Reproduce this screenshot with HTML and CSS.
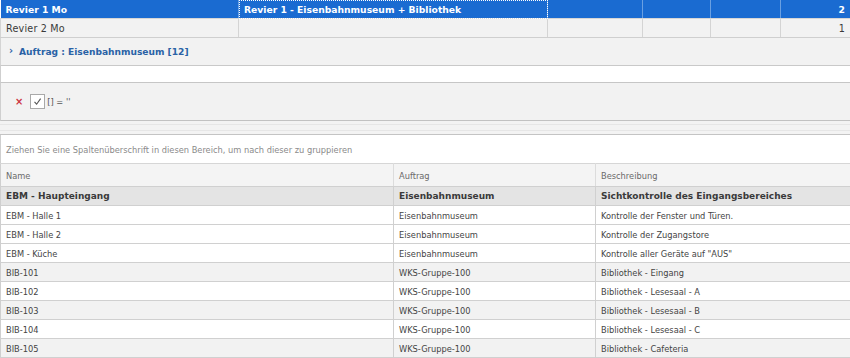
FILE: index.html
```html
<!DOCTYPE html>
<html>
<head>
<meta charset="utf-8">
<link rel="stylesheet" href="styles.css">
</head>
<body>
<table class="master">
  <colgroup><col class="c1"><col class="c2"><col class="c3"><col class="c4"><col class="c5"><col></colgroup>
  <tr class="sel">
    <td class="b">Revier 1 Mo</td>
    <td class="b focus">Revier 1 - Eisenbahnmuseum + Bibliothek</td>
    <td></td><td></td><td></td>
    <td class="b num">2</td>
  </tr>
  <tr class="norm">
    <td>Revier 2 Mo</td>
    <td></td><td></td><td></td><td></td>
    <td class="num">1</td>
  </tr>
</table>
<div class="grouprow"><span class="chev">›</span><span class="gtext">Auftrag : Eisenbahnmuseum [12]</span></div>
<div class="blank"></div>
<div class="filter">
  <span class="x">×</span>
  <span class="chk"><svg width="11" height="11" viewBox="0 0 11 11"><path d="M2.5 5.8 L4.6 8.2 L8.6 2.6" fill="none" stroke="#555" stroke-width="1.1"/></svg></span>
  <span class="ftext">[] = ''</span>
</div>
<div class="splitter"><div class="sl"></div></div>
<div class="grouppanel">Ziehen Sie eine Spaltenüberschrift in diesen Bereich, um nach dieser zu gruppieren</div>
<table class="detail">
  <colgroup><col class="d1"><col class="d2"><col></colgroup>
  <tr class="head"><td>Name</td><td>Auftrag</td><td>Beschreibung</td></tr>
  <tr class="grp"><td>EBM - Haupteingang</td><td>Eisenbahnmuseum</td><td>Sichtkontrolle des Eingangsbereiches</td></tr>
  <tr><td>EBM - Halle 1</td><td>Eisenbahnmuseum</td><td>Kontrolle der Fenster und Türen.</td></tr>
  <tr><td>EBM - Halle 2</td><td>Eisenbahnmuseum</td><td>Kontrolle der Zugangstore</td></tr>
  <tr><td>EBM - Küche</td><td>Eisenbahnmuseum</td><td>Kontrolle aller Geräte auf "AUS"</td></tr>
  <tr class="alt"><td>BIB-101</td><td>WKS-Gruppe-100</td><td>Bibliothek - Eingang</td></tr>
  <tr><td>BIB-102</td><td>WKS-Gruppe-100</td><td>Bibliothek - Lesesaal - A</td></tr>
  <tr class="alt"><td>BIB-103</td><td>WKS-Gruppe-100</td><td>Bibliothek - Lesesaal - B</td></tr>
  <tr><td>BIB-104</td><td>WKS-Gruppe-100</td><td>Bibliothek - Lesesaal - C</td></tr>
  <tr class="alt"><td>BIB-105</td><td>WKS-Gruppe-100</td><td>Bibliothek - Cafeteria</td></tr>
</table>
</body>
</html>
```
FILE: styles.css
```css
html, body {
  margin: 0;
  padding: 0;
  background: #ffffff;
}
body {
  font-family: "DejaVu Sans Condensed", "DejaVu Sans", sans-serif;
  font-size: 9.2px;
  color: #3a3a3a;
  width: 850px;
  overflow: hidden;
}
table {
  border-collapse: collapse;
  table-layout: fixed;
  width: 850px;
}
td {
  padding: 0 5px;
  white-space: nowrap;
  overflow: hidden;
}
.master {
  font-family: "DejaVu Sans", sans-serif;
  font-size: 9.6px;
  letter-spacing: 0.2px;
}
.master .c1 { width: 238px; }
.master .c2 { width: 309px; }
.master .c3 { width: 95px; }
.master .c4 { width: 68px; }
.master .c5 { width: 70px; }
.master td { height: 18px; }
.master .sel td {
  background: #1a6bd1;
  color: #ffffff;
  border-right: 1px solid #6aa0e2;
  border-bottom: 1px solid #d6d6d6;
}
.master .sel td.focus {
  outline: 1px dotted #ffffff;
  outline-offset: -1px;
}
.master .norm td {
  background: #f2f2f2;
  border-right: 1px solid #d4d4d4;
  border-bottom: 1px solid #cfcfcf;
}
.master .norm td:first-child { border-left: 1px solid #d4d4d4; }
.master td:last-child { border-right: none; }
.master .b {
  font-weight: bold;
  font-size: 9.2px;
  letter-spacing: 0;
}
.num { text-align: right; }
.grouprow {
  height: 27px;
  background: #f2f2f2;
  border-left: 1px solid #d4d4d4;
  border-bottom: 1px solid #c9c9c9;
  display: flex;
  align-items: center;
  padding-left: 8px;
}
.chev {
  color: #2d63a8;
  font-weight: bold;
  font-size: 11px;
  margin-right: 6px;
  margin-top: -2px;
}
.gtext {
  font-family: "DejaVu Sans", sans-serif;
  color: #2a62a6;
  font-weight: bold;
  font-size: 9.1px;
}
.blank {
  height: 16px;
  background: #ffffff;
  border-left: 1px solid #cfcfcf;
  border-bottom: 1px solid #c6c6c6;
}
.filter {
  height: 37px;
  background: #f2f2f2;
  border-left: 1px solid #cfcfcf;
  border-bottom: 1px solid #c2c2c2;
  display: flex;
  align-items: center;
  padding-left: 14px;
}
.x {
  color: #cc3340;
  font-weight: bold;
  font-size: 11px;
  margin-right: 7px;
  margin-top: -1px;
}
.chk {
  width: 13px;
  height: 13px;
  border: 1px solid #a9a9a9;
  background: #ffffff;
  display: flex;
  align-items: center;
  justify-content: center;
  margin-right: 2px;
}
.ftext { color: #555555; }
.splitter {
  background: #f3f3f3;
  border-bottom: 1px solid #c4c4c4;
  padding-top: 3px;
  box-sizing: border-box;
  height: 14px;
}
.splitter .sl {
  height: 5px;
  border-top: 1px solid #e6e6e6;
  border-bottom: 1px solid #e6e6e6;
}
.grouppanel {
  height: 28px;
  border-left: 1px solid #cfcfcf;
  display: flex;
  align-items: center;
  padding-left: 5px;
  color: #8a8a8a;
}
.detail .d1 { width: 393px; }
.detail .d2 { width: 202px; }
.detail td {
  height: 18px;
  border-bottom: 1px solid #d0d0d0;
  border-right: 1px solid #d0d0d0;
  color: #444444;
}
.detail td:first-child { border-left: 1px solid #cfcfcf; }
.detail td:last-child { border-right: none; }
.detail .head td {
  height: 22px;
  background: #f4f4f4;
  color: #6a6a6a;
  border-top: 1px solid #d6d6d6;
  border-right: 1px solid #dcdcdc;
}
.detail .head td:last-child { border-right: none; }
.detail .grp td {
  background: #e4e4e4;
  font-family: "DejaVu Sans", sans-serif;
  font-weight: bold;
  font-size: 9px;
  color: #3a3a3a;
}
.detail .alt td { background: #f2f2f2; }
```
